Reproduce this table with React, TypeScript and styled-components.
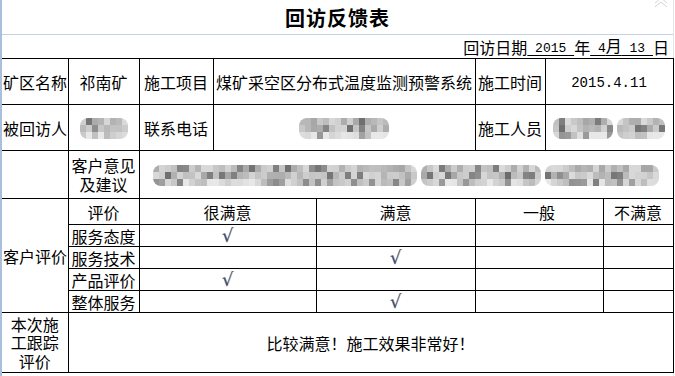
import React from 'react';
import styled, { createGlobalStyle } from 'styled-components';

const GlobalStyle = createGlobalStyle`
  html, body {
    margin: 0;
    padding: 0;
    background: #ffffff;
  }
  body {
    font-family: "Noto Sans CJK SC", "Noto Sans", sans-serif;
    color: #000;
  }
`;

const Page = styled.div`
  width: 675px;
  height: 376px;
  overflow: hidden;
  background: #fff;
`;

const Sheet = styled.div`
  width: 671px;
  border-left: 2px solid #a9bfdc;
  border-right: 1px solid #e2e6ec;
  height: 376px;
`;

const TitleBar = styled.div`
  position: relative;
  height: 34px;
  border-bottom: 1px solid #c4d3e7;
  display: flex;
  align-items: center;
  justify-content: center;
  font-size: 20px;
  font-weight: 700;
  letter-spacing: 1px;
`;

const Collapse = styled.svg`
  position: absolute;
  right: 4px;
  top: -4px;
`;

const DateRow = styled.div`
  height: 23px;
  display: flex;
  align-items: center;
  justify-content: flex-end;
  padding-right: 4px;
  font-size: 16px;
  line-height: 18px;
`;

const Mono = styled.span`
  font-family: "Liberation Mono", "DejaVu Sans Mono", monospace;
  font-size: 13px;
  white-space: pre;
`;

const Under = styled.span`
  text-decoration: underline;
  text-underline-offset: 3px;
  text-decoration-thickness: 1px;
  white-space: pre;
`;

const Table = styled.table`
  border-collapse: collapse;
  table-layout: fixed;
  width: 671px;
  font-size: 16px;
  line-height: 18px;
`;

const Row = styled.tr<{ $h: number }>`
  height: ${p => p.$h}px;
`;

const Cell = styled.td<{ $noLeft?: boolean }>`
  border: 1px solid #000;
  ${p => p.$noLeft && 'border-left: none;'}
  padding: 0 1px;
  text-align: center;
  vertical-align: middle;
  white-space: nowrap;
  overflow: hidden;
`;

const WrapCell = styled(Cell)`
  white-space: normal;
  line-height: 18.5px;
`;

const Check = styled.span`
  font-family: "DejaVu Sans", sans-serif;
  font-size: 18px;
  line-height: 18px;
  color: #2f5494;
  text-shadow: 0.8px 0 0 rgba(225, 145, 50, 0.75);
`;

const Num = styled.span`
  font-family: "Liberation Mono", "DejaVu Sans Mono", monospace;
  font-size: 14px;
`;

const MosaicWrap = styled.span`
  display: inline-flex;
  gap: 4px;
  vertical-align: middle;
  align-items: center;
`;

const Blob = styled.span<{ $cols: number }>`
  display: grid;
  grid-template-columns: repeat(${p => p.$cols}, 6px);
  grid-auto-rows: 7px;
  border-radius: 8px;
  overflow: hidden;
  filter: blur(0.35px);
`;

const Pixel = styled.span``;

function makeRand(seed: number) {
  let s = seed;
  return () => {
    s = (s * 9301 + 49297) % 233280;
    return s / 233280;
  };
}

const Mosaic: React.FC<{ segments: number[]; seed: number }> = ({ segments, seed }) => {
  const rand = makeRand(seed);
  return (
    <MosaicWrap>
      {segments.map((cols, si) => (
        <Blob key={si} $cols={cols}>
          {Array.from({ length: cols * 3 }).map((_, i) => {
            const r = rand();
            const row = Math.floor(i / cols);
            let v = 0xa6 + Math.floor(r * 0x40);
            if (r > 0.84) v = 0x6c + Math.floor(rand() * 0x24);
            if (row === 2) v = Math.min(0xe8, v + 0x14);
            return <Pixel key={i} style={{ background: `rgb(${v},${v},${v})` }} />;
          })}
        </Blob>
      ))}
    </MosaicWrap>
  );
};

const ratings = [
  { label: '服务态度', pick: 0 },
  { label: '服务技术', pick: 1 },
  { label: '产品评价', pick: 0 },
  { label: '整体服务', pick: 1 },
];

const mark = <Check>√</Check>;

export default function App() {
  return (
    <Page>
      <GlobalStyle />
      <Sheet>
        <TitleBar>
          回访反馈表
          <Collapse width="16" height="12" viewBox="0 0 16 12">
            <polyline points="2,7 8,2 14,7" fill="none" stroke="#d4d4d4" strokeWidth="1" />
            <polyline points="2,11 8,6 14,11" fill="none" stroke="#d4d4d4" strokeWidth="1" />
          </Collapse>
        </TitleBar>
        <DateRow>
          回访日期
          <Under><Mono> 2015 </Mono></Under>
          年
          <Under><Mono> 4</Mono>月<Mono> 13 </Mono></Under>
          日
        </DateRow>
        <Table>
          <colgroup>
            <col style={{ width: 66 }} />
            <col style={{ width: 71 }} />
            <col style={{ width: 74 }} />
            <col style={{ width: 103 }} />
            <col style={{ width: 159 }} />
            <col style={{ width: 70 }} />
            <col style={{ width: 58 }} />
            <col style={{ width: 70 }} />
          </colgroup>
          <tbody>
            <Row $h={46}>
              <Cell $noLeft>矿区名称</Cell>
              <Cell>祁南矿</Cell>
              <Cell>施工项目</Cell>
              <Cell colSpan={2}>煤矿采空区分布式温度监测预警系统</Cell>
              <Cell>施工时间</Cell>
              <Cell colSpan={2}><Num>2015.4.11</Num></Cell>
            </Row>
            <Row $h={46}>
              <Cell $noLeft>被回访人</Cell>
              <Cell><Mosaic segments={[8]} seed={11} /></Cell>
              <Cell>联系电话</Cell>
              <Cell colSpan={2}><Mosaic segments={[15]} seed={27} /></Cell>
              <Cell>施工人员</Cell>
              <Cell colSpan={2}><Mosaic segments={[10, 8]} seed={5} /></Cell>
            </Row>
            <Row $h={48}>
              <Cell $noLeft />
              <WrapCell>客户意见及建议</WrapCell>
              <Cell colSpan={6}><Mosaic segments={[44, 20, 19]} seed={73} /></Cell>
            </Row>
            <Row $h={26}>
              <Cell $noLeft rowSpan={5}>客户评价</Cell>
              <Cell>评价</Cell>
              <Cell colSpan={2}>很满意</Cell>
              <Cell>满意</Cell>
              <Cell colSpan={2}>一般</Cell>
              <Cell>不满意</Cell>
            </Row>
            {ratings.map(r => (
              <Row $h={22} key={r.label}>
                <Cell>{r.label}</Cell>
                <Cell colSpan={2}>{r.pick === 0 && mark}</Cell>
                <Cell>{r.pick === 1 && mark}</Cell>
                <Cell colSpan={2} />
                <Cell />
              </Row>
            ))}
            <Row $h={60}>
              <WrapCell $noLeft>
                本次施<br />工跟踪<br />评价
              </WrapCell>
              <Cell colSpan={7}>比较满意！施工效果非常好！</Cell>
            </Row>
          </tbody>
        </Table>
      </Sheet>
    </Page>
  );
}
